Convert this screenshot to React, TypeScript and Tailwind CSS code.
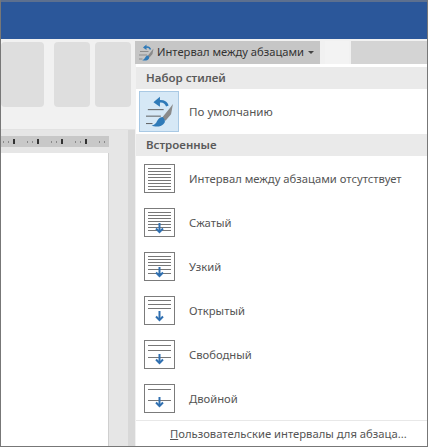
const font = "font-['Noto_Sans','Open_Sans',sans-serif]";

function StyleSetIcon({ className }: { className: string }) {
  return (
    <svg viewBox="0 0 40 42" className={className} fill="none">
      <path d="M8 19H25M6 26H22M6 34H13" stroke="#555" strokeWidth="1" />
      <path d="M29 15C27 10 22 9 17 11" stroke="#2f7ab8" strokeWidth="3" />
      <path d="M21 5L14 11L21 16Z" fill="#2f7ab8" />
      <path d="M23 28L32 17L35 13L33 24L27 31Z" fill="#8a8a8a" />
      <path d="M24 27C20 27 19 30 17 33C15 35 14 36 12 36C16 38 23 38 26 33C27 31 26 29 24 27Z" fill="#2f7ab8" />
    </svg>
  );
}

function SpacingIcon({ lines, arrowY }: { lines: number[]; arrowY?: number }) {
  return (
    <div className="h-[29px] w-[31px] shrink-0 border border-[#7b7b7b] bg-white">
      <svg viewBox="0 0 29 27" className="h-[27px] w-[29px]" fill="none">
        {lines.map((y) => (
          <path key={y} d={`M3 ${y + 0.5}H26`} stroke="#777" strokeWidth="1" />
        ))}
        {arrowY !== undefined && (
          <>
            <path d={`M14.5 ${arrowY}V${arrowY + 9}`} stroke="#2f6fb0" strokeWidth="2" />
            <path d={`M11 ${arrowY + 5.5}L14.5 ${arrowY + 9}L18 ${arrowY + 5.5}`} stroke="#2f6fb0" strokeWidth="2" />
          </>
        )}
      </svg>
    </div>
  );
}

const items = [
  { label: "Интервал между абзацами отсутствует", lines: [3, 6, 9, 12, 15, 18, 21, 24] },
  { label: "Сжатый", lines: [3, 6, 9, 12, 15, 18, 21], arrowY: 14 },
  { label: "Узкий", lines: [3, 6, 9, 12, 16, 20], arrowY: 14 },
  { label: "Открытый", lines: [3, 7, 11], arrowY: 14 },
  { label: "Свободный", lines: [4, 9, 16], arrowY: 13 },
  { label: "Двойной", lines: [4, 15], arrowY: 12 },
];

const rulerMarks = [0, 1, 2, 3, 4];

export default function App() {
  return (
    <div className={`${font} flex h-[447px] w-[428px] flex-col overflow-hidden border-x border-b border-[#777] bg-[#f1f1f1] text-[#555]`}>
      <div className="h-[39px] shrink-0 border-t-2 border-[#5d708f] bg-[#2b579a]" />

      <div className="flex min-h-0 flex-1">
        {/* Document side */}
        <div className="flex w-[134px] shrink-0 flex-col">
          <div className="flex h-[91px] shrink-0 border-b border-[#e2e2e2] pt-[3px]">
            <div className="h-[65px] w-[43px] rounded-sm bg-[#dedede]" />
            <div className="ml-[10px] h-[65px] w-[36px] rounded-sm bg-[#dedede]" />
            <div className="ml-[5px] h-[65px] w-[36px] rounded-sm bg-[#dedede]" />
          </div>
          <div className="flex flex-1 bg-[#e6e6e6]">
            <div className="flex w-[108px] flex-col pt-[6px]">
              <div className="flex h-[11px] shrink-0 items-center overflow-hidden bg-[#c8c8c8]">
                {rulerMarks.map((i) => (
                  <div key={i} className="flex h-full w-[24px] shrink-0 items-center justify-end gap-[4px] pr-[10px]">
                    <span className="h-[2px] w-px bg-[#8a8a8a]" />
                    <span className="h-[2px] w-px bg-[#8a8a8a]" />
                    <span className="h-[5px] w-[2px] bg-[#333]" />
                  </div>
                ))}
              </div>
              <div className="mt-[6px] flex-1 border-r border-[#cfcfcf] bg-white" />
            </div>
            <div className="flex-1" />
            <div className="w-[7px] bg-[#d8d8d8]" />
          </div>
        </div>

        {/* Dropdown column */}
        <div className="flex min-w-0 flex-1 flex-col">
          <div className="flex h-[25px] shrink-0 pt-[2px]">
            <div className="flex w-[185px] items-center bg-[#c6c6c6] pl-[1px]">
              <StyleSetIcon className="h-[21px] w-[20px] shrink-0" />
              <span className="ml-[1px] text-[11.2px] whitespace-nowrap text-[#333]">Интервал между абзацами</span>
              <span className="ml-[4px] h-0 w-0 border-x-[3px] border-t-[3px] border-x-transparent border-t-[#444]" />
            </div>
            <div className="ml-[5px] w-[24px] bg-[#f3f3f3]" />
            <div className="ml-[2px] flex-1 bg-[#d4d4d4]" />
          </div>

          <div className="ml-[1px] flex min-h-0 flex-1 flex-col bg-white pt-[3px]">
            <div className="flex h-[22px] shrink-0 items-center bg-[#eaeaea] pl-[10px] text-[11.5px] font-semibold text-[#5a5a5a]">Набор стилей</div>
            <div className="flex h-[45px] shrink-0 items-center pl-[3px]">
              <div className="flex h-[41px] w-[40px] items-center justify-center border border-[#a9c9e4] bg-[#d6e8f6]">
                <StyleSetIcon className="h-[39px] w-[38px]" />
              </div>
              <span className="ml-[10px] text-[11.6px]">По умолчанию</span>
            </div>
            <div className="flex h-[22px] shrink-0 items-center bg-[#eaeaea] pl-[10px] text-[11.5px] font-semibold text-[#5a5a5a]">Встроенные</div>

            {items.map((item) => (
              <div key={item.label} className="flex h-[44px] shrink-0 items-center pl-[8px]">
                <SpacingIcon lines={item.lines} arrowY={item.arrowY} />
                <span className="ml-[14px] pt-[2px] text-[11.25px] whitespace-nowrap">{item.label}</span>
              </div>
            ))}

            <div className="flex flex-1 items-center border-t border-[#e8e8e8] pl-[34px] pt-[2px] text-[11.25px] whitespace-nowrap">
              <span><span className="underline">П</span>ользовательские интервалы для абзаца...</span>
            </div>
          </div>
        </div>
      </div>
    </div>
  );
}
